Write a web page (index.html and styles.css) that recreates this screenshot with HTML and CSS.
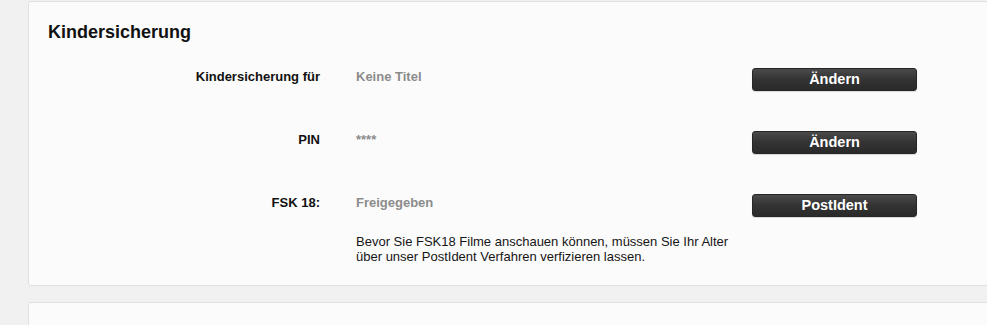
FILE: index.html
```html
<!DOCTYPE html>
<html lang="de">
<head>
<meta charset="utf-8">
<title>Kindersicherung</title>
<link rel="stylesheet" href="styles.css">
</head>
<body>
<div class="page">
  <section class="card">
    <h2 class="card-title">Kindersicherung</h2>
    <div class="settings">
      <div class="row">
        <div class="label">Kindersicherung für</div>
        <div class="value">Keine Titel</div>
        <button class="btn">Ändern</button>
      </div>
      <div class="row">
        <div class="label">PIN</div>
        <div class="value">****</div>
        <button class="btn">Ändern</button>
      </div>
      <div class="row">
        <div class="label">FSK 18:</div>
        <div class="value">
          <div>Freigegeben</div>
          <p class="note">Bevor Sie FSK18 Filme anschauen können, müssen Sie Ihr Alter<br>über unser PostIdent Verfahren verfizieren lassen.</p>
        </div>
        <button class="btn">PostIdent</button>
      </div>
    </div>
  </section>
  <section class="card card-next"></section>
</div>
</body>
</html>
```
FILE: styles.css
```css
html, body {
  margin: 0;
  padding: 0;
}
body {
  background: #f1f1f1;
  font-family: "Liberation Sans", Arial, sans-serif;
  color: #111;
  overflow: hidden;
  height: 325px;
}
.page {
  padding: 1px 0 0 28px;
  width: 1000px;
}
.card {
  background: #fbfbfb;
  border: 1px solid #e0e0e0;
  border-radius: 3px;
  padding: 19px 0 21px 0;
}
.card-title {
  margin: 0 0 25px 19px;
  font-size: 18px;
  line-height: 22px;
  font-weight: bold;
  color: #111;
}
.settings {
  display: flex;
  flex-direction: column;
  gap: 40px;
}
.row {
  display: grid;
  grid-template-columns: 291px 360px 165px;
  column-gap: 36px;
  align-items: start;
}
.label {
  text-align: right;
  font-size: 13px;
  line-height: 15px;
  font-weight: bold;
  padding-top: 1px;
  color: #111;
}
.value {
  font-size: 13px;
  line-height: 15px;
  font-weight: bold;
  color: #8c8c8c;
  padding-top: 1px;
}
.note {
  margin: 24px 0 0 0;
  font-size: 13px;
  line-height: 15px;
  font-weight: normal;
  color: #151515;
  white-space: nowrap;
}
.btn {
  height: 23px;
  width: 165px;
  border: 1px solid #262626;
  border-radius: 3px;
  background: linear-gradient(#4a4a4a, #333 50%, #2a2a2a);
  box-shadow: 0 1px 1px rgba(0, 0, 0, 0.15);
  color: #fff;
  font-family: "Liberation Sans", Arial, sans-serif;
  font-size: 14.5px;
  font-weight: bold;
  line-height: 21px;
  padding: 0;
  text-align: center;
}
.card-next {
  margin-top: 16px;
  height: 40px;
  padding: 0;
}
```
